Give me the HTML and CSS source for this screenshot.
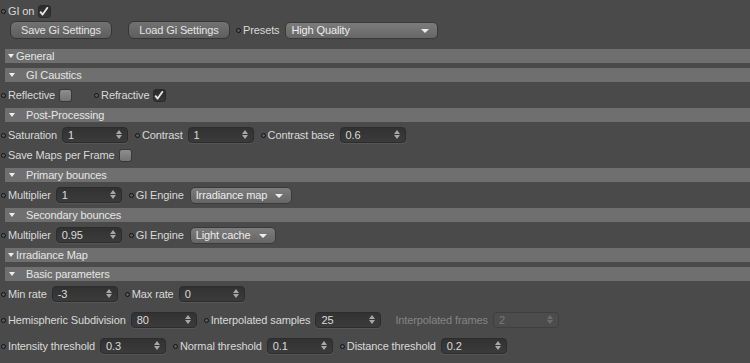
FILE: index.html
```html
<!DOCTYPE html>
<html>
    <head>
        <meta charset="utf-8">
        <title>GI Settings</title>
        <link rel="stylesheet" href="styles.css">
    </head>
    <body>
    <div class="panel">
        <div class="row row-top">
            <span class="param"><i class="dot"></i><span class="lbl">GI on</span>
                <span class="check on"><svg width="12" height="12" viewBox="0 0 12 12"><path d="M2.2 6.6 L4.6 9.6 L9.8 2.2" fill="none" stroke="#e8e8e8" stroke-width="1.8" stroke-linejoin="round"/></svg></span>
            </span>
        </div>

        <div class="row row-buttons">
            <button class="btn btn-save">Save Gi Settings</button>
            <button class="btn btn-load">Load Gi Settings</button>
            <span class="param"><i class="dot"></i><span class="lbl">Presets</span><span class="select select-presets">High Quality</span></span>
        </div>

        <div class="bar bar-main bar-first">General</div>
        <div class="bar bar-sub">GI Caustics</div>
        <div class="row">
            <span class="param"><i class="dot"></i><span class="lbl">Reflective</span><span class="check"></span></span>
            <span class="param param-wide"><i class="dot"></i><span class="lbl">Refractive</span>
                <span class="check on"><svg width="12" height="12" viewBox="0 0 12 12"><path d="M2.2 6.6 L4.6 9.6 L9.8 2.2" fill="none" stroke="#e8e8e8" stroke-width="1.8" stroke-linejoin="round"/></svg></span>
            </span>
        </div>

        <div class="bar bar-sub">Post-Processing</div>
        <div class="row">
            <span class="param"><i class="dot"></i><span class="lbl">Saturation</span><span class="field">1</span></span>
            <span class="param"><i class="dot"></i><span class="lbl">Contrast</span><span class="field">1</span></span>
            <span class="param"><i class="dot"></i><span class="lbl">Contrast base</span><span class="field">0.6</span></span>
        </div>
        <div class="row row-tight">
            <span class="param"><i class="dot"></i><span class="lbl">Save Maps per Frame</span><span class="check"></span></span>
        </div>

        <div class="bar bar-sub">Primary bounces</div>
        <div class="row">
            <span class="param"><i class="dot"></i><span class="lbl">Multiplier</span><span class="field">1</span></span>
            <span class="param"><i class="dot"></i><span class="lbl">GI Engine</span><span class="select">Irradiance map</span></span>
        </div>

        <div class="bar bar-sub">Secondary bounces</div>
        <div class="row">
            <span class="param"><i class="dot"></i><span class="lbl">Multiplier</span><span class="field">0.95</span></span>
            <span class="param"><i class="dot"></i><span class="lbl">GI Engine</span><span class="select">Light cache</span></span>
        </div>

        <div class="bar bar-main">Irradiance Map</div>
        <div class="bar bar-sub">Basic parameters</div>
        <div class="row">
            <span class="param"><i class="dot"></i><span class="lbl">Min rate</span><span class="field">-3</span></span>
            <span class="param"><i class="dot"></i><span class="lbl">Max rate</span><span class="field">0</span></span>
        </div>
        <div class="row row-loose">
            <span class="param"><i class="dot"></i><span class="lbl">Hemispheric Subdivision</span><span class="field">80</span></span>
            <span class="param"><i class="dot"></i><span class="lbl">Interpolated samples</span><span class="field">25</span></span>
            <span class="param disabled"><i class="dot"></i><span class="lbl">Interpolated frames</span><span class="field">2</span></span>
        </div>
        <div class="row row-loose">
            <span class="param"><i class="dot"></i><span class="lbl">Intensity threshold</span><span class="field">0.3</span></span>
            <span class="param"><i class="dot"></i><span class="lbl">Normal threshold</span><span class="field">0.1</span></span>
            <span class="param"><i class="dot"></i><span class="lbl">Distance threshold</span><span class="field">0.2</span></span>
        </div>
    </div>
    </body>
</html>
```

FILE: styles.css
```css
body, html {
    height: 100%;
    margin: 0;
    padding: 0;
}
body {
    background: #4a4a4a;
    color: #d9d9d9;
    font-family: "Liberation Sans", Arial, sans-serif;
    font-size: 11px;
    letter-spacing: -0.12px;
}
.panel {
    display: flex;
    flex-direction: column;
}
.row {
    display: flex;
    align-items: center;
    height: 16px;
    margin-top: 5px;
    padding-left: 1px;
    white-space: nowrap;
}
.row-top {
    height: 14px;
    margin-top: 4px;
}
.row-buttons {
    height: 18px;
    margin-top: 3px;
    padding-left: 0;
}
.row-tight {
    margin-top: 4px;
}
.row-loose {
    margin-top: 10px;
}
.param {
    display: flex;
    align-items: center;
    margin-right: 7px;
}
.param-wide {
    margin-left: 15px;
}
.dot {
    display: block;
    width: 3px;
    height: 3px;
    border: 1px solid #111;
    border-radius: 50%;
    background: #5a5a5a;
    margin-right: 2px;
}
.lbl {
    margin-right: 5px;
}
.disabled {
    color: #858585;
}
.disabled .dot {
    visibility: hidden;
}
.check {
    display: block;
    width: 13px;
    height: 13px;
    box-sizing: border-box;
    border: 1px solid #383838;
    border-radius: 3px;
    background: linear-gradient(#8e8e8e, #737373);
    margin-left: -1px;
}
.check.on {
    background: linear-gradient(#2a2a2a, #383838);
    border-color: #2a2a2a;
}
.check svg {
    display: block;
    margin: -1px 0 0 -1px;
}
.field {
    position: relative;
    display: block;
    width: 66px;
    height: 16px;
    box-sizing: border-box;
    border: 1px solid #2c2c2c;
    border-radius: 4px;
    background: linear-gradient(#323232, #3b3b3b);
    box-shadow: 0 1px 0 rgba(255, 255, 255, .07);
    color: #dcdcdc;
    padding-left: 5px;
    line-height: 14px;
}
.field:before,
.field:after {
    content: "";
    position: absolute;
    right: 5px;
    border-left: 3px solid transparent;
    border-right: 3px solid transparent;
}
.field:before {
    top: 2px;
    border-bottom: 4px solid #a8a8a8;
}
.field:after {
    top: 7px;
    border-top: 4px solid #a8a8a8;
}
.disabled .field {
    background: #4c4c4c;
    border-color: #3f3f3f;
    box-shadow: none;
    color: #7a7a7a;
}
.disabled .field:before {
    border-bottom-color: #6c6c6c;
}
.disabled .field:after {
    border-top-color: #6c6c6c;
}
.select {
    position: relative;
    display: block;
    height: 17px;
    box-sizing: border-box;
    border: 1px solid #3a3a3a;
    border-radius: 5px;
    background: linear-gradient(#7c7c7c, #666);
    color: #ededed;
    padding: 0 24px 0 5px;
    line-height: 15px;
    margin-left: 1px;
}
.select:after {
    content: "";
    position: absolute;
    right: 8px;
    top: 6px;
    border-left: 4px solid transparent;
    border-right: 4px solid transparent;
    border-top: 4px solid #eee;
}
.select-presets {
    width: 153px;
}
.btn {
    height: 18px;
    width: 102px;
    box-sizing: border-box;
    border: 1px solid #353535;
    border-radius: 6px;
    background: linear-gradient(#727272, #5e5e5e);
    color: #e4e4e4;
    font-family: "Liberation Sans", Arial, sans-serif;
    font-size: 11px;
    letter-spacing: -0.12px;
    padding: 0;
    line-height: 15px;
}
.btn-save {
    margin-left: 10px;
}
.btn-load {
    margin-left: 16px;
    margin-right: 6px;
}
.bar {
    height: 14px;
    margin-top: 5px;
    margin-left: 5px;
    background: #6f6f6f;
    color: #e6e6e6;
    line-height: 14px;
    white-space: nowrap;
}
.bar-first {
    margin-top: 10px;
}
.bar:before {
    content: "";
    display: inline-block;
    vertical-align: middle;
    border-left: 3px solid transparent;
    border-right: 3px solid transparent;
    border-top: 4px solid #eee;
    margin-top: -2px;
}
.bar-main {
    padding-left: 3px;
}
.bar-main:before {
    margin-right: 2px;
}
.bar-sub {
    padding-left: 4px;
}
.bar-sub:before {
    margin-right: 11px;
}
```
